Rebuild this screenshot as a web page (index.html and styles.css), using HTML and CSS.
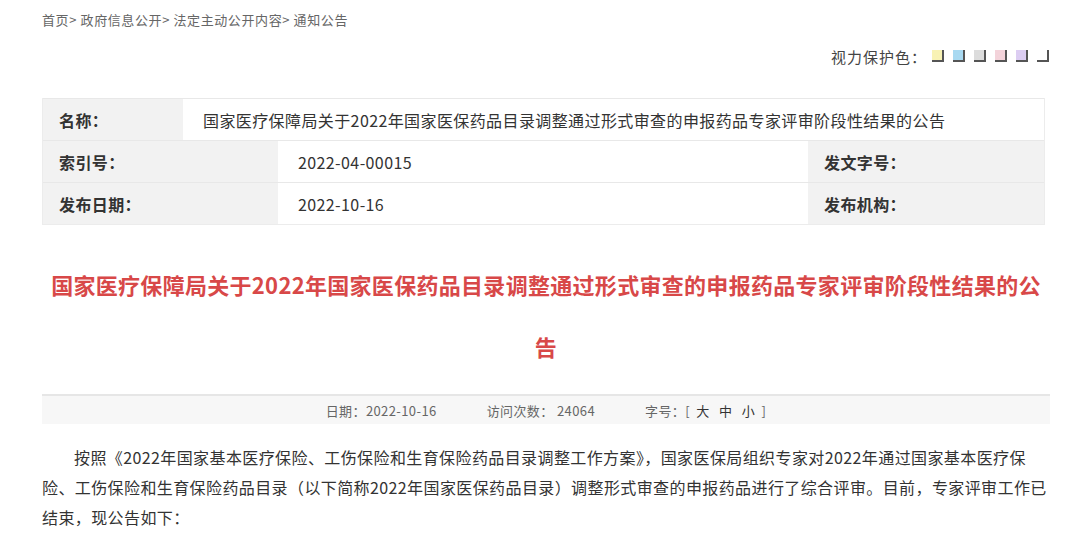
FILE: index.html
```html
<!DOCTYPE html>
<html lang="zh-CN">
<head>
  <meta charset="UTF-8">
  <title>通知公告 - 国家医疗保障局</title>
  <link rel="stylesheet" href="styles.css">
</head>
<body>

  <div class="page">
    <div class="crumbs">
      <a href="#">首页</a>&gt; <a href="#">政府信息公开</a>&gt; <a href="#">法定主动公开内容</a>&gt; <a href="#">通知公告</a>
    </div>

    <div class="eye-care">
      <span>视力保护色：</span>
      <a class="swatch yellow" href="#"></a>
      <a class="swatch blue" href="#"></a>
      <a class="swatch gray" href="#"></a>
      <a class="swatch pink" href="#"></a>
      <a class="swatch purple" href="#"></a>
      <a class="swatch white" href="#"></a>
    </div>

    <div class="meta">
      <div class="meta-row row-name">
        <div class="label">名称：</div>
        <div class="value">国家医疗保障局关于2022年国家医保药品目录调整通过形式审查的申报药品专家评审阶段性结果的公告</div>
      </div>
      <div class="meta-row row-pair">
        <div class="label">索引号：</div>
        <div class="value">2022-04-00015</div>
        <div class="label">发文字号：</div>
      </div>
      <div class="meta-row row-pair">
        <div class="label">发布日期：</div>
        <div class="value">2022-10-16</div>
        <div class="label">发布机构：</div>
      </div>
    </div>

    <h1 class="title">国家医疗保障局关于2022年国家医保药品目录调整通过形式审查的申报药品专家评审阶段性结果的公告</h1>

    <div class="info-bar">
      <span>日期：2022-10-16</span>
      <span>访问次数： 24064</span>
      <span>字号：[ <a href="#">大</a> <a href="#">中</a> <a href="#">小</a> ]</span>
    </div>

    <div class="content">
      <p>按照《2022年国家基本医疗保险、工伤保险和生育保险药品目录调整工作方案》，国家医保局组织专家对2022年通过国家基本医疗保险、工伤保险和生育保险药品目录（以下简称2022年国家医保药品目录）调整形式审查的申报药品进行了综合评审。目前，专家评审工作已结束，现公告如下：</p>
    </div>
  </div>

</body>
</html>
```

FILE: styles.css
```css
* {
  margin: 0; padding: 0; box-sizing: border-box;
}

body {
  font-family: "Noto Sans CJK SC", "Liberation Sans", sans-serif;
  background: #fff;
  color: #333;
}

a {
  color: inherit;
  text-decoration: none;
}

.page {
  width: 1008px;
  margin-left: 42px;
}

.crumbs {
  font-size: 13px;
  letter-spacing: 0.6px;
  color: #666;
  line-height: 20px;
  padding-top: 10px;
}

.eye-care {
  display: flex;
  justify-content: flex-end;
  align-items: center;
  gap: 9px;
  font-size: 15px;
  letter-spacing: 1px;
  color: #444;
  height: 32px;
  margin-top: 10px;
  padding-right: 1px;
}

.eye-care span {
  margin-right: -4px;
}

.swatch {
  width: 12px;
  height: 12px;
  border-right: 2px solid #555;
  border-bottom: 2px solid #555;
}

.swatch.yellow { background: #f8f2b4; }
.swatch.blue { background: #a8d9f1; }
.swatch.gray { background: #dcdcdc; }
.swatch.pink { background: #f3d3da; }
.swatch.purple { background: #dccdf2; }
.swatch.white { background: #fff; }

.meta {
  width: 1003px;
  margin-top: 26px;
  border: 1px solid #ececec;
  border-top: none;
  font-size: 16px;
  letter-spacing: 0.4px;
}

.meta-row {
  display: grid;
  height: 42px;
  border-top: 1px solid #e8e8e8;
}

.row-name {
  grid-template-columns: 140px 1fr;
}

.row-pair {
  grid-template-columns: 235px 530px 1fr;
}

.meta .label {
  display: flex;
  align-items: center;
  background: #f2f2f2;
  font-weight: bold;
  padding-left: 16px;
}

.meta .value {
  display: flex;
  align-items: center;
  background: #fff;
  padding-left: 20px;
}

.title {
  font-size: 22px;
  font-weight: bold;
  letter-spacing: 0.3px;
  color: #d84848;
  text-align: center;
  line-height: 62px;
  margin-top: 28px;
}

.info-bar {
  display: flex;
  justify-content: center;
  gap: 50px;
  margin-top: 17px;
  height: 30px;
  align-items: center;
  background: #f7f7f7;
  border-top: 2px solid #e6e6e6;
  font-size: 13px;
  letter-spacing: 0.4px;
  color: #666;
}

.info-bar a {
  color: #333;
  margin: 0 3px;
}

.content {
  margin-top: 18px;
  font-size: 16px;
  letter-spacing: 0.4px;
  line-height: 30px;
  color: #333;
}

.content p {
  text-indent: 2em;
}
```
